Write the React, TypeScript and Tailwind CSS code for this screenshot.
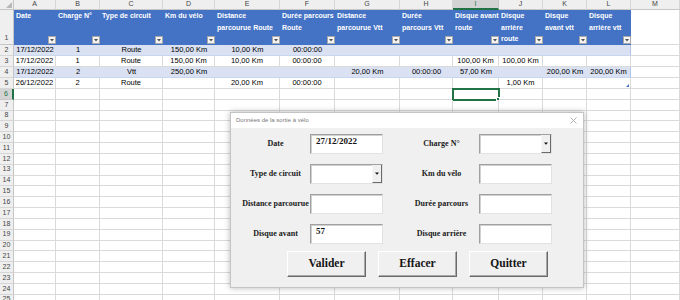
import React from 'react';

const cols = [
  { key: 'A', w: 'w-[42px]' },
  { key: 'B', w: 'w-[44px]' },
  { key: 'C', w: 'w-[63px]' },
  { key: 'D', w: 'w-[52px]' },
  { key: 'E', w: 'w-[65px]' },
  { key: 'F', w: 'w-[55px]' },
  { key: 'G', w: 'w-[65px]' },
  { key: 'H', w: 'w-[53px]' },
  { key: 'I', w: 'w-[46px]' },
  { key: 'J', w: 'w-[44px]' },
  { key: 'K', w: 'w-[44px]' },
  { key: 'L', w: 'w-[44px]' },
  { key: 'M', w: 'w-[49px]' },
];

const headers: string[][] = [
  ['Date'],
  ['Charge N°'],
  ['Type de circuit'],
  ['Km du vélo'],
  ['Distance', 'parcourue Route'],
  ['Durée parcours', 'Route'],
  ['Distance', 'parcourue Vtt'],
  ['Durée', 'parcours Vtt'],
  ['Disque avant', 'route'],
  ['Disque', 'arrière', 'route'],
  ['Disque', 'avant vtt'],
  ['Disque', 'arrière vtt'],
];

const data: string[][] = [
  ['17/12/2022', '1', 'Route', '150,00 Km', '10,00 Km', '00:00:00', '', '', '', '', '', ''],
  ['17/12/2022', '1', 'Route', '150,00 Km', '10,00 Km', '00:00:00', '', '', '100,00 Km', '100,00 Km', '', ''],
  ['17/12/2022', '2', 'Vtt', '250,00 Km', '', '', '20,00 Km', '00:00:00', '57,00 Km', '', '200,00 Km', '200,00 Km'],
  ['26/12/2022', '2', 'Route', '', '20,00 Km', '00:00:00', '', '', '', '1,00 Km', '', ''],
];

const emptyRows = Array.from({ length: 20 }, (_, i) => i + 6);

function RowLabel({ n, active }: { n: number | string; active?: boolean }) {
  return (
    <div
      className={`w-[14px] shrink-0 flex items-center justify-center text-[7px] border-b ${
        active
          ? 'bg-[#d3d3d3] text-[#217346] border-r-2 border-r-[#217346] border-b-[#c6c6c6]'
          : 'bg-[#efefef] text-[#444] border-r border-r-[#c6c6c6] border-b-[#d6d6d6]'
      }`}
    >
      {n}
    </div>
  );
}

function FilterButton() {
  return (
    <span className="absolute right-0 bottom-[1px] size-[8px] bg-[#f4f4f4] border border-[#a8a8a8] flex items-center justify-center">
      <svg width="4" height="3" viewBox="0 0 4 3">
        <path d="M0 0 L4 0 L2 2.5 Z" fill="#505050" />
      </svg>
    </span>
  );
}

function Field({ value, combo }: { value?: string; combo?: boolean }) {
  return (
    <div className="w-[73px] h-[20px] shrink-0 flex bg-white border border-t-[#a0a0a0] border-l-[#a0a0a0] border-r-[#e2e2e2] border-b-[#e2e2e2] shadow-[inset_1px_1px_0_#d0d0d0]">
      <div className="flex-1 pl-[5px] pt-[1px] text-[9px] leading-[11px] font-bold text-[#111]">{value}</div>
      {combo && (
        <div className="w-[10px] shrink-0 flex items-center justify-center bg-[#f0f0f0] border-l border-l-[#f8f8f8] border-r border-r-[#6a6a6a] border-b border-b-[#6a6a6a]">
          <svg width="4" height="3" viewBox="0 0 4 3">
            <path d="M0 0.5 L4 0.5 L2 2.8 Z" fill="#111" />
          </svg>
        </div>
      )}
    </div>
  );
}

function Label({ text, right }: { text: string; right?: boolean }) {
  return (
    <div
      className={`shrink-0 text-center text-[8px] font-bold text-[#1a1a1a] whitespace-nowrap ${
        right ? 'w-[63px] ml-[27px] mr-[6px]' : 'w-[69px]'
      }`}
    >
      {text}
    </div>
  );
}

function Btn({ text }: { text: string }) {
  return (
    <div className="w-[79px] h-[26px] shrink-0 flex items-center justify-center bg-[#f0f0f0] border border-t-white border-l-white border-r-[#6a6a6a] border-b-[#6a6a6a] shadow-[inset_-1px_-1px_0_#a8a8a8] text-[11.5px] font-bold text-[#151515]">
      {text}
    </div>
  );
}

export default function App() {
  return (
    <div className="relative w-[680px] h-[300px] overflow-hidden bg-white font-['Liberation_Sans',Arial,sans-serif]">
      {/* column letters */}
      <div className="flex h-[10px]">
        <div className="w-[14px] shrink-0 bg-[#efefef] border-r border-b border-[#c6c6c6] relative">
          <svg className="absolute right-[1px] bottom-[1px]" width="6" height="6" viewBox="0 0 6 6">
            <path d="M6 0 L6 6 L0 6 Z" fill="#b8b8b8" />
          </svg>
        </div>
        {cols.map((c) => (
          <div
            key={c.key}
            className={`${c.w} shrink-0 flex items-center justify-center text-[7px] border-r border-b ${
              c.key === 'I'
                ? 'bg-[#d3d3d3] text-[#217346] border-r-[#c6c6c6] border-b-2 border-b-[#217346]'
                : 'bg-[#efefef] text-[#444] border-[#d6d6d6] border-b-[#c6c6c6]'
            }`}
          >
            {c.key}
          </div>
        ))}
      </div>

      {/* header row */}
      <div className="flex h-[35px]">
        <div className="w-[14px] shrink-0 bg-[#efefef] text-[#444] border-r border-b border-[#c6c6c6] flex items-end justify-center pb-[1px] text-[7px]">
          1
        </div>
        {cols.map((c, i) =>
          i < 12 ? (
            <div
              key={c.key}
              className={`${c.w} shrink-0 relative bg-[#4472c4] pl-[2px] text-[7px] leading-[11.6px] font-bold text-white whitespace-nowrap overflow-hidden`}
            >
              {headers[i].map((line) => (
                <div key={line}>{line}</div>
              ))}
              <FilterButton />
            </div>
          ) : (
            <div key={c.key} className={`${c.w} shrink-0 border-r border-b border-[#dadada]`} />
          ),
        )}
      </div>

      {/* data rows */}
      {data.map((row, r) => {
        const banded = r % 2 === 0;
        const last = r === data.length - 1;
        return (
          <div key={r} className="flex h-[11px]">
            <RowLabel n={r + 2} />
            {cols.map((c, i) =>
              i < 12 ? (
                <div
                  key={c.key}
                  className={`${c.w} shrink-0 relative flex items-center justify-center text-[7.5px] text-black border-b ${
                    banded ? 'bg-[#d9e1f2] border-b-[#c9d6ef]' : 'border-r border-r-[#dadada] border-b-[#dadada]'
                  } ${last ? 'border-b-[#a9bde3]' : ''} ${i === 11 ? 'border-r border-r-[#b4c6e7]' : ''}`}
                >
                  {row[i]}
                  {last && i === 11 && (
                    <svg className="absolute right-[1px] bottom-[1px]" width="3" height="3" viewBox="0 0 3 3">
                      <path d="M3 0 L3 3 L0 3 Z" fill="#4472c4" />
                    </svg>
                  )}
                </div>
              ) : (
                <div key={c.key} className={`${c.w} shrink-0 border-r border-b border-[#dadada]`} />
              ),
            )}
          </div>
        );
      })}

      {/* empty rows */}
      {emptyRows.map((n) => (
        <div key={n} className="flex h-[10.83px]">
          <RowLabel n={n} active={n === 6} />
          {cols.map((c) => (
            <div
              key={c.key}
              className={`${c.w} shrink-0 relative border-r border-b border-[#dadada] ${
                n === 6 && c.key === 'I' ? 'outline-2 outline-[#217346] -outline-offset-1' : ''
              }`}
            >
              {n === 6 && c.key === 'I' && (
                <span className="absolute -right-[2px] -bottom-[2px] size-[4px] bg-[#217346] border border-white" />
              )}
            </div>
          ))}
        </div>
      ))}

      {/* user form */}
      <div className="absolute left-[230px] top-[112px] w-[354px] h-[176px] flex flex-col bg-[#f0f0f0] border border-[#c4c4c4] shadow-[0_0_6px_rgba(0,0,0,0.28)] font-['Liberation_Serif','Times_New_Roman',serif]">
        <div className="h-[15px] shrink-0 bg-white flex items-center justify-between pl-[5px] pr-[6px] font-['Liberation_Sans',Arial,sans-serif] text-[6px] text-[#7a7a7a]">
          <span>Données de la sortie à vélo</span>
          <svg width="7" height="7" viewBox="0 0 7 7">
            <path d="M0.5 0.5 L6.5 6.5 M6.5 0.5 L0.5 6.5" stroke="#a0a0a0" strokeWidth="0.8" />
          </svg>
        </div>
        <div className="flex flex-col gap-[10px] pt-[6px] pl-[10px]">
          <div className="flex items-center">
            <Label text="Date" />
            <Field value="27/12/2022" />
            <Label text="Charge N°" right />
            <Field combo />
          </div>
          <div className="flex items-center">
            <Label text="Type de circuit" />
            <Field combo />
            <Label text="Km du vélo" right />
            <Field />
          </div>
          <div className="flex items-center">
            <Label text="Distance parcourue" />
            <Field />
            <Label text="Durée parcours" right />
            <Field />
          </div>
          <div className="flex items-center">
            <Label text="Disque avant" />
            <Field value="57" />
            <Label text="Disque arrière" right />
            <Field />
          </div>
        </div>
        <div className="flex gap-[12px] pl-[56px] mt-[7px]">
          <Btn text="Valider" />
          <Btn text="Effacer" />
          <Btn text="Quitter" />
        </div>
      </div>
    </div>
  );
}
